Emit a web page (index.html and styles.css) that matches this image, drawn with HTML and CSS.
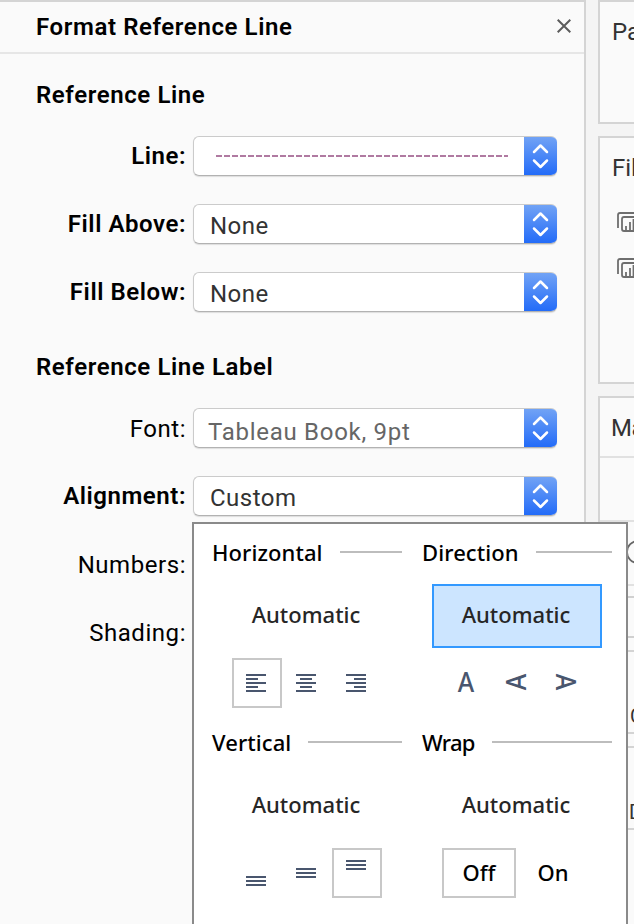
FILE: index.html
```html
<!DOCTYPE html>
<html lang="en">
<head>
<meta charset="utf-8">
<title>Format Reference Line</title>
<link rel="stylesheet" href="styles.css">
</head>
<body>
<svg class="defs" aria-hidden="true">
  <symbol id="chevrons" viewBox="0 0 33 40"><path d="M10 16 16.500 9.500 23 16M10 24.500 16.500 31 23 24.500" fill="none" stroke="#fff" stroke-width="2.500" stroke-linecap="round" stroke-linejoin="round"/></symbol>
  <symbol id="pill" viewBox="0 0 28 22"><path d="M1 16V3Q1 1 3 1H28M28 5H7Q5 5 5 7V17Q5 19 7 19H28M9 18V14M13 18V10M16.500 18V7" fill="none" stroke="#6e6e6e" stroke-width="1.800"/></symbol>
</svg>
<div class="app">
  <section class="panel">
    <header class="panel-head">
      <h1>Format Reference Line</h1>
      <svg class="close" viewBox="0 0 14 14"><path d="M.7.7 13.300 13.300M13.300.7.7 13.300" stroke="#5c5c5c" stroke-width="2"/></svg>
    </header>
    <h2>Reference Line</h2>
    <div class="row"><label class="strong">Line:</label><div class="select"><div class="value"><svg class="dash" viewBox="0 0 292 2"><path d="M0 1H292" stroke="#b07aa1" stroke-width="2" stroke-dasharray="6 2"/></svg></div><svg class="stepper"><use href="#chevrons"/></svg></div></div>
    <div class="row"><label class="strong">Fill Above:</label><div class="select"><div class="value">None</div><svg class="stepper"><use href="#chevrons"/></svg></div></div>
    <div class="row"><label class="strong">Fill Below:</label><div class="select"><div class="value">None</div><svg class="stepper"><use href="#chevrons"/></svg></div></div>
    <h2>Reference Line Label</h2>
    <div class="row"><label>Font:</label><div class="select"><div class="value font-value">Tableau Book, 9pt</div><svg class="stepper"><use href="#chevrons"/></svg></div></div>
    <div class="row"><label class="strong">Alignment:</label><div class="select"><div class="value">Custom</div><svg class="stepper"><use href="#chevrons"/></svg></div></div>
    <div class="row"><label>Numbers:</label></div>
    <div class="row"><label>Shading:</label></div>
  </section>
  <aside class="shelves">
    <section class="card pages"><h3>Pages</h3></section>
    <section class="card filters"><h3>Filters</h3>
      <svg class="pill"><use href="#pill"/></svg>
      <svg class="pill"><use href="#pill"/></svg>
    </section>
    <section class="card marks"><h3>Marks</h3>
      <div class="tab"></div>
      <div class="tab circle"><svg viewBox="0 0 24 24"><circle cx="12" cy="12" r="11" fill="none" stroke="#666" stroke-width="1.700"/></svg></div>
      <div class="type"></div>
      <div class="cell color">Color</div>
      <div class="cell detail">Detail</div>
    </section>
  </aside>
</div>
<div class="popup">
  <section class="group">
    <h4>Horizontal</h4>
    <div class="auto">Automatic</div>
    <div class="options">
      <div class="opt boxed"><svg viewBox="0 0 20 18"><path d="M0 1H20M0 5H12M0 9H20M0 13H12M0 17H20"/></svg></div>
      <div class="opt"><svg viewBox="0 0 20 18"><path d="M0 1H20M4 5H16M0 9H20M4 13H16M0 17H20"/></svg></div>
      <div class="opt"><svg viewBox="0 0 20 18"><path d="M0 1H20M8 5H20M0 9H20M8 13H20M0 17H20"/></svg></div>
    </div>
  </section>
  <section class="group">
    <h4>Direction</h4>
    <div class="auto active">Automatic</div>
    <div class="options">
      <div class="opt"><span class="letter">A</span></div>
      <div class="opt"><span class="letter up">A</span></div>
      <div class="opt"><span class="letter down">A</span></div>
    </div>
  </section>
  <section class="group">
    <h4>Vertical</h4>
    <div class="auto">Automatic</div>
    <div class="options">
      <div class="opt bottom"><svg viewBox="0 0 20 10"><path d="M0 1H20M0 5H20M0 9H20"/></svg></div>
      <div class="opt middle"><svg viewBox="0 0 20 10"><path d="M0 1H20M0 5H20M0 9H20"/></svg></div>
      <div class="opt boxed top"><svg viewBox="0 0 20 10"><path d="M0 1H20M0 5H20M0 9H20"/></svg></div>
    </div>
  </section>
  <section class="group wrap">
    <h4>Wrap</h4>
    <div class="auto">Automatic</div>
    <div class="options">
      <div class="opt word boxed">Off</div>
      <div class="opt word">On</div>
    </div>
  </section>
</div>
</body>
</html>
```
FILE: styles.css
```css
* { box-sizing: border-box; }
body { margin: 0; width: 634px; height: 924px; overflow: hidden; position: relative; background: #f4f4f4; font: 24px/28px Roboto, "Liberation Sans", sans-serif; color: #000; }
h1, h2, h3, h4 { margin: 0; font-size: inherit; font-weight: 500; }
h1, h2 { font-weight: 600; letter-spacing: .6px; }
svg { display: block; }
.defs { display: none; }
.app { display: flex; gap: 12px; height: 924px; }
.panel { flex: 0 0 586px; background: #fafafa; border-top: 2px solid #d4d4d4; border-right: 2px solid #d4d4d4; }
.panel-head { display: flex; align-items: center; justify-content: space-between; height: 52px; padding: 0 13px 2px 36px; border-bottom: 2px solid #e6e6e6; }
.panel-head h1 { padding-top: 2px; }
.close { width: 14px; height: 14px; }
h2 { height: 68px; padding: 27px 0 0 36px; }
.row { display: flex; align-items: center; gap: 7px; height: 68px; }
.row label { flex: 0 0 186px; padding-top: 1px; text-align: right; white-space: nowrap; letter-spacing: .55px; }
.row .strong { padding-top: 0; font-weight: 600; letter-spacing: .55px; }
.select { display: flex; width: 364px; height: 40px; border-radius: 6px; overflow: hidden; background: #fff; border: 1px solid #cbcbcb; border-right: 0; border-bottom-color: #b2b2b2; box-shadow: 0 1px 1px #ddd; }
.value { flex: 1; padding: 7px 0 0 16px; color: #333; letter-spacing: .5px; }
.font-value { padding: 9px 0 0 14px; color: #666; letter-spacing: .72px; }
.dash { width: 292px; height: 2px; margin: 11px 0 0 6px; }
.stepper { width: 33px; height: 40px; margin: -1px 0; background: linear-gradient(#73a4f5, #216af8); }
.shelves { flex: 0 0 36px; display: flex; flex-direction: column; gap: 12px; overflow: hidden; color: #333; }
.card { flex: none; width: 200px; border: 2px solid #d4d4d4; background: #fafafa; }
.card h3 { font-weight: 400; padding: 16px 0 0 12px; }
.pages { height: 124px; }
.filters { height: 248px; }
.marks { height: 600px; }
.card.marks h3 { height: 60px; padding-left: 11px; letter-spacing: -.5px; border-bottom: 2px solid #e1e1e1; }
.pill { width: 28px; height: 22px; margin: 30px 0 0 17px; }
.pill + .pill { margin-top: 24px; }
.tab { height: 64px; border-bottom: 2px solid #e1e1e1; }
.circle { padding: 18px 0 0 26px; }
.circle svg { width: 24px; height: 24px; }
.type { height: 42px; margin: 10px 0 12px 12px; border: 2px solid #d0d0d0; }
.cell { height: 84px; margin: 0 0 12px 12px; border: 2px solid #d4d4d4; font-size: 20px; padding: 50px 0 0 16px; }
.detail { padding-left: 15px; }
.popup { position: absolute; left: 192px; top: 522px; width: 436px; height: 440px; border: 2px solid #8a8a8a; background: #fff; padding: 14px 14px 0 18px; display: grid; grid-template-columns: 190px 190px; gap: 20px; align-content: start; font: 500 22px/30px "Noto Sans", "Open Sans", sans-serif; }
.group h4 { height: 30px; padding-bottom: 2px; display: flex; align-items: center; white-space: nowrap; letter-spacing: .08px; }
.group h4::after { content: ""; flex: 1; height: 2px; margin: 0 0 0 17px; background: #bdbdbd; }
.wrap h4 { letter-spacing: -.7px; }
.auto { width: 170px; height: 64px; margin: 16px 10px 10px; padding: 0 2px 4px 0; display: flex; align-items: center; justify-content: center; color: #262626; }
.active { background: #cce5ff; border: 2px solid #3399ff; }
.options { display: flex; height: 50px; padding-left: 20px; }
.opt { width: 50px; height: 50px; border: 2px solid transparent; padding: 14px 0 0 12px; }
.boxed { border-color: #c8c8c8; }
.opt svg { width: 20px; stroke: #49566e; stroke-width: 2; }
.bottom { padding-top: 26px; }
.middle { padding-top: 18px; }
.top { padding-top: 10px; }
.letter { display: block; width: 20px; height: 20px; line-height: 16px; text-align: center; color: #49566e; font-size: 27px; font-weight: 500; transform: scaleX(.93); }
.up { line-height: 20px; transform: translateY(-2px) rotate(-90deg) scaleX(.93); }
.down { line-height: 20px; transform: translateY(-2px) rotate(90deg) scaleX(.93); }
.word { width: 74px; padding: 7px 0; text-align: center; }
```
